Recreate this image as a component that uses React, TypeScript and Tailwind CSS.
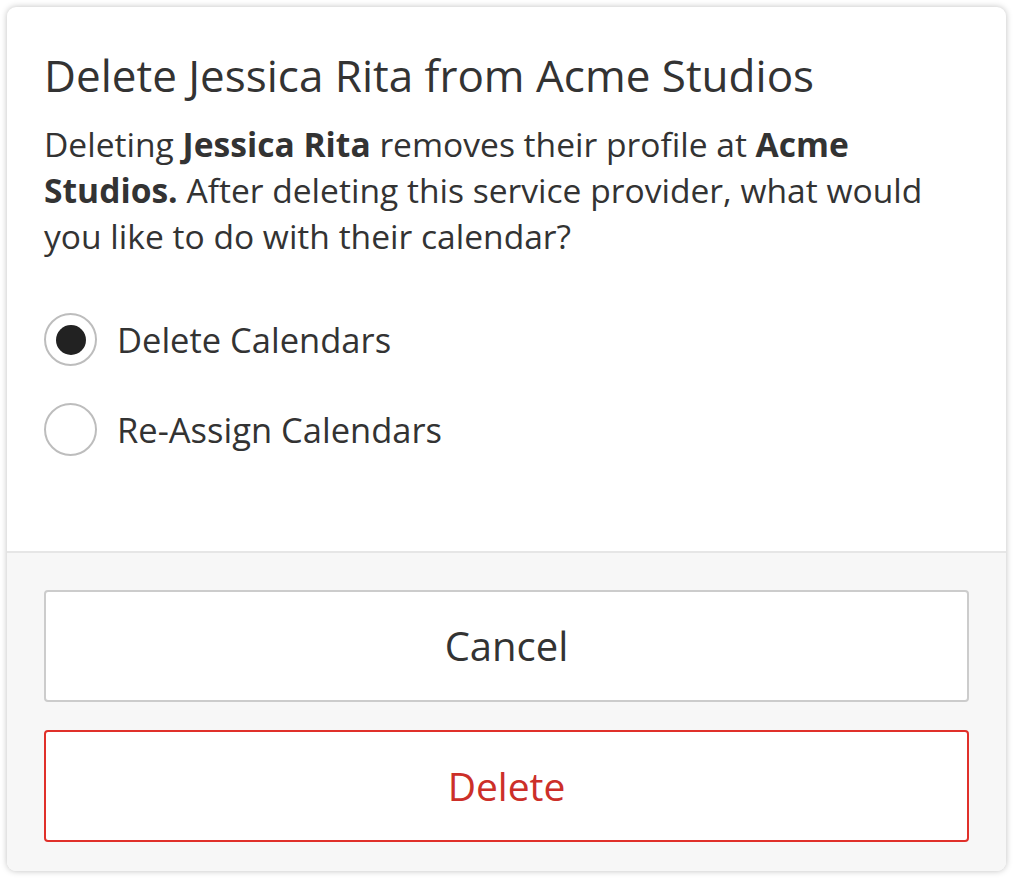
import React, { useState } from 'react'

export default function App() {
  const [choice, setChoice] = useState('delete')

  const options = [
    { id: 'delete', label: 'Delete Calendars' },
    { id: 'reassign', label: 'Re-Assign Calendars' },
  ]

  return (
    <div className="min-h-[879px] bg-white p-[7px] font-['Open_Sans',sans-serif] text-[#333333]">
      <div className="flex h-[864px] w-[999px] flex-col overflow-hidden rounded-[9px] bg-white shadow-[0_0_6px_rgba(0,0,0,0.25)]">
        {/* body */}
        <div className="flex-1 px-[37px] pt-[44px]">
          <h1 className="text-[44px] leading-[48px] font-normal">
            Delete Jessica Rita from Acme Studios
          </h1>
          <p className="mt-[22px] text-[33.6px] leading-[46px]">
            Deleting <b className="font-bold">Jessica Rita</b> removes their profile at{' '}
            <b className="font-bold">Acme Studios.</b> After deleting this service provider, what would
            you like to do with their calendar?
          </p>

          <div className="mt-[54px] flex flex-col gap-[37px]">
            {options.map(o => (
              <label
                key={o.id}
                className="flex cursor-pointer items-center gap-[20px]"
                onClick={() => setChoice(o.id)}
              >
                <span className="flex h-[53px] w-[53px] items-center justify-center rounded-full border-2 border-[#bdbdbd] bg-white">
                  {choice === o.id && <span className="h-[30px] w-[30px] rounded-full bg-[#222222]" />}
                </span>
                <span className="text-[34.5px] leading-[48px]">{o.label}</span>
              </label>
            ))}
          </div>
        </div>

        {/* footer */}
        <div className="flex h-[320px] flex-col gap-[28px] border-t-2 border-[#e6e6e6] bg-[#f7f7f7] px-[37px] pt-[37px]">
          <button className="h-[112px] w-full rounded-[4px] border-2 border-[#cccccc] bg-white text-[40px] text-[#333333]">
            Cancel
          </button>
          <button className="h-[112px] w-full rounded-[4px] border-2 border-[#e0302a] bg-white text-[39px] text-[#cc2f29]">
            Delete
          </button>
        </div>
      </div>
    </div>
  )
}
